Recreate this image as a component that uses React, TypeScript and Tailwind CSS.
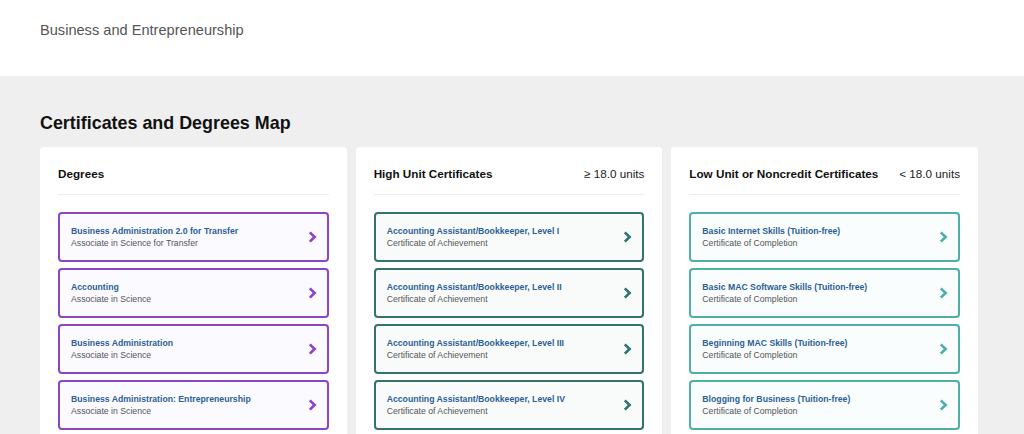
type Item = { title: string; sub: string };

type Column = {
  heading: string;
  units?: string;
  tone: 'purple' | 'teal' | 'aqua';
  items: Item[];
};

const columns: Column[] = [
  {
    heading: 'Degrees',
    tone: 'purple',
    items: [
      { title: 'Business Administration 2.0 for Transfer', sub: 'Associate in Science for Transfer' },
      { title: 'Accounting', sub: 'Associate in Science' },
      { title: 'Business Administration', sub: 'Associate in Science' },
      { title: 'Business Administration: Entrepreneurship', sub: 'Associate in Science' },
    ],
  },
  {
    heading: 'High Unit Certificates',
    units: '≥ 18.0 units',
    tone: 'teal',
    items: [
      { title: 'Accounting Assistant/Bookkeeper, Level I', sub: 'Certificate of Achievement' },
      { title: 'Accounting Assistant/Bookkeeper, Level II', sub: 'Certificate of Achievement' },
      { title: 'Accounting Assistant/Bookkeeper, Level III', sub: 'Certificate of Achievement' },
      { title: 'Accounting Assistant/Bookkeeper, Level IV', sub: 'Certificate of Achievement' },
    ],
  },
  {
    heading: 'Low Unit or Noncredit Certificates',
    units: '< 18.0 units',
    tone: 'aqua',
    items: [
      { title: 'Basic Internet Skills (Tuition-free)', sub: 'Certificate of Completion' },
      { title: 'Basic MAC Software Skills (Tuition-free)', sub: 'Certificate of Completion' },
      { title: 'Beginning MAC Skills (Tuition-free)', sub: 'Certificate of Completion' },
      { title: 'Blogging for Business (Tuition-free)', sub: 'Certificate of Completion' },
    ],
  },
];

const toneBox = {
  purple: 'border-[#8c45c4] bg-[#fbfaff]',
  teal: 'border-[#33736e] bg-[#f9fbfb]',
  aqua: 'border-[#4dafa6] bg-[#f9fdfd]',
};

const toneIcon = {
  purple: 'text-[#8c45c4]',
  teal: 'text-[#33736e]',
  aqua: 'text-[#4dafa6]',
};

function Chevron({ className }: { className: string }) {
  return (
    <svg width="9" height="12" viewBox="0 0 9 12" fill="none" className={className} aria-hidden="true">
      <path d="M1.8 1.4 6.6 6 1.8 10.6" stroke="currentColor" strokeWidth="2.7" strokeLinejoin="miter" />
    </svg>
  );
}

function ProgramLink({ item, tone }: { item: Item; tone: Column['tone'] }) {
  return (
    <a
      href="#"
      className={`flex h-[50px] items-center justify-between rounded-[4px] border-2 pr-[10px] pl-[11px] ${toneBox[tone]}`}
    >
      <div className="flex flex-col">
        <span className="text-[8.7px] leading-[12px] font-bold text-[#2c5f95]">{item.title}</span>
        <span className="text-[8.7px] leading-[12px] text-[#555]">{item.sub}</span>
      </div>
      <Chevron className={toneIcon[tone]} />
    </a>
  );
}

function MapCard({ col }: { col: Column }) {
  return (
    <section className="rounded-[4px] bg-white px-[18px] pt-[18px]">
      <div className="flex items-center justify-between border-b border-[#eeeeee] pb-[11px]">
        <h3 className="text-[11.7px] leading-[18px] font-bold text-[#111]">{col.heading}</h3>
        {col.units && <span className="text-[11.7px] leading-[18px] text-[#222]">{col.units}</span>}
      </div>
      <div className="flex flex-col gap-[6px] pt-[17px] pb-[20px]">
        {col.items.map((item) => (
          <ProgramLink key={item.title} item={item} tone={col.tone} />
        ))}
      </div>
    </section>
  );
}

export default function App() {
  return (
    <div className="min-h-screen bg-[#efefef] font-['Liberation_Sans',Arial,sans-serif]">
      <header className="flex h-[76px] items-start bg-white px-[40px] pt-[20px]">
        <h1 className="text-[14.6px] leading-[20px] text-[#555]">Business and Entrepreneurship</h1>
      </header>
      <main className="px-[40px] pt-[36px]">
        <h2 className="mb-[13px] text-[17.9px] leading-[22px] font-bold text-[#111]">
          Certificates and Degrees Map
        </h2>
        <div className="grid w-[938px] grid-cols-3 gap-[9px]">
          {columns.map((col) => (
            <MapCard key={col.heading} col={col} />
          ))}
        </div>
      </main>
    </div>
  );
}
